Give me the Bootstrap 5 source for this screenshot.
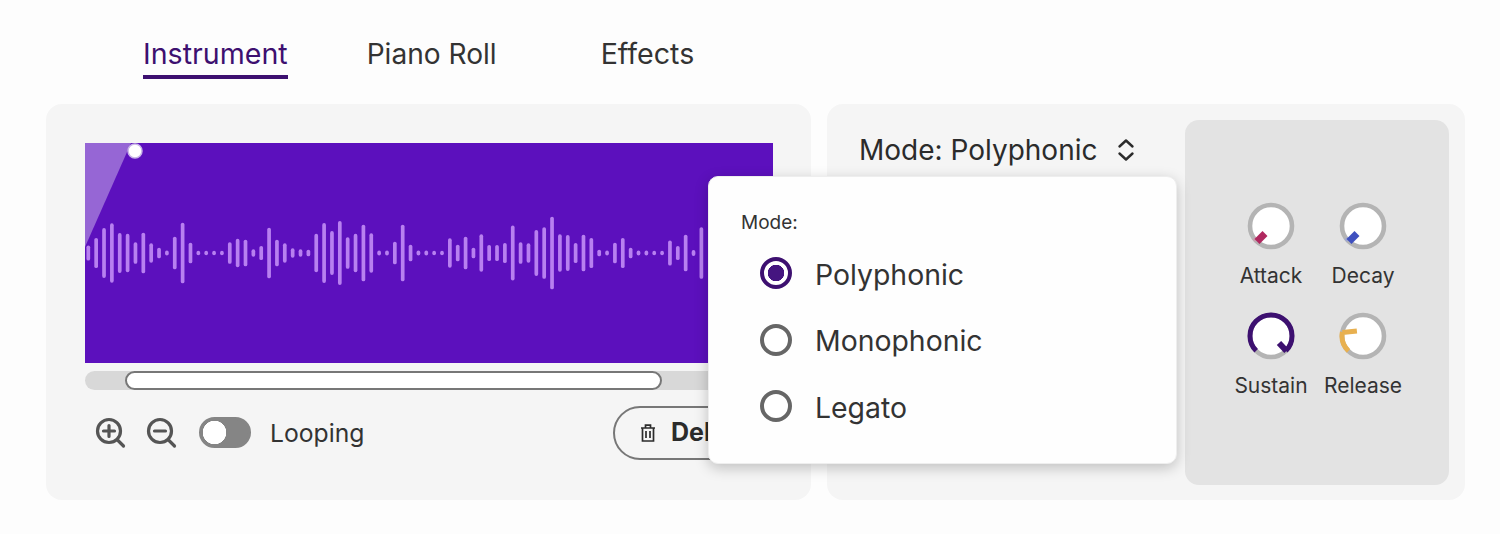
<!DOCTYPE html>
<html lang="en"><head><meta charset="utf-8"><title>Instrument</title>
<link href="https://cdn.jsdelivr.net/npm/bootstrap@5.3.0/dist/css/bootstrap.min.css" rel="stylesheet">
<style>
html,body{height:534px;overflow:hidden}
body{background:#fdfdfd;color:#2b2b2b;font-family:"Inter","Noto Sans",sans-serif}
.tabbar{padding:32px 0 0 143px;gap:79px;height:104px}
.tabbar .nav-link{padding:0;font-size:28.6px;line-height:44px;height:47px;color:#333;border-bottom:4px solid transparent;border-radius:0}
.tabbar .nav-link.active{color:#3d1070;border-bottom-color:#3d1070}
.tabbar .nav-item:nth-child(2){margin-right:25px}
.tabbar .nav-item:nth-child(2) .nav-link{font-size:28.1px}
.stage{gap:16px;padding:0 35px 0 46px;height:396px}
.pane{background:#f5f5f5;border-radius:16px}
.pane-l{width:765px;padding:39px 38px 0 39px}
.pane-r{width:638px;padding:16px}
.wave{display:block;width:688px;height:220px;background:#5c10bd}
.track{height:19px;margin-top:8px;background:#d8d8d8;border-radius:10px}
.thumb{width:537px;height:19px;margin-left:40px;background:#fff;border:2px solid #777;border-radius:10px}
.tools{margin-top:16px;height:54px}
.tool-ic{display:block;width:34px;height:34px}
.tool-gap{margin-left:17px}
.sw.form-switch{padding:0;margin:0 0 0 21px;min-height:0;display:flex;align-items:center}
.sw .form-check-input{width:52px;height:31px;margin:0;border:3px solid #858585;background:#858585 radial-gradient(circle at 12.5px 50%,#fff 0 11.5px,transparent 12px);box-shadow:none}
.sw label{font-size:24.7px;margin:2px 0 0 19px;color:#333}
.del{margin-left:auto;width:160px;height:54px;border:2px solid #777;border-radius:27px;font-size:25px;font-weight:700;color:#2b2b2b;padding:0 0 0 26px;gap:16px}
.mode-col{flex:1 1 auto;min-width:0;padding:15px 0 0 16px;position:relative}
.mode-btn{padding:0;border:0;font-size:28px;line-height:30px;color:#2b2b2b;gap:20px;background:none}
.mode-menu.dropdown-menu{left:-135px;top:56px;width:469px;height:288px;padding:34px 32px;border:1px solid #eee;border-radius:10px;background:#fefefe;box-shadow:0 4px 14px rgba(0,0,0,.22);z-index:5}
.menu-cap{font-size:19px;line-height:24px;margin-bottom:5px;color:#333}
.opt.form-check{display:flex;align-items:center;padding:0 0 0 19px;margin:0;height:66.5px;min-height:0}
.opt .form-check-input{width:32px;height:32px;margin:0;float:none;border:4px solid #666;background:#fff;box-shadow:none}
.opt .form-check-input:checked{border-color:#3d1070;background:radial-gradient(circle,#451580 0 8px,#fff 8.5px)}
.opt label{font-size:28.4px;margin:4px 0 0 23px;color:#333}
.knobs{flex:0 0 264px;width:264px;height:365px;padding-bottom:4px;background:#e3e3e3;border-radius:14px;grid-template-columns:92px 92px;justify-content:center;align-content:center;row-gap:23px}
.knob{font-size:21px;line-height:26px;text-align:center;color:#333;white-space:nowrap}
.knob svg{display:block;margin:0 auto 13px}
</style></head>
<body>
<ul class="nav tabbar">
<li class="nav-item"><a class="nav-link active" href="#">Instrument</a></li>
<li class="nav-item"><a class="nav-link" href="#">Piano Roll</a></li>
<li class="nav-item"><a class="nav-link" href="#">Effects</a></li>
</ul>
<div class="d-flex stage">
<section class="pane pane-l">
<svg class="wave" id="wave" viewBox="0 0 688 220" role="img" aria-label="Waveform">
<polygon points="0,0 46,0 0,104" fill="#fff" fill-opacity=".36"/>
<g id="bars" stroke="#b880f0" stroke-width="3.7" stroke-linecap="round"></g>
<circle cx="50" cy="8" r="7" fill="#fff" stroke="#c9b5e8" stroke-width="1.5"/>
</svg>
<div class="track"><div class="thumb"></div></div>
<div class="d-flex align-items-center tools">
<svg class="tool-ic ms-2" viewBox="0 0 34 34" fill="none" stroke="#555" stroke-width="3.2" stroke-linecap="round"><circle cx="16" cy="15" r="11.5"/><path d="M24.5 24l6 6M16 9.5v11M10.5 15h11"/></svg>
<svg class="tool-ic tool-gap" viewBox="0 0 34 34" fill="none" stroke="#555" stroke-width="3.2" stroke-linecap="round"><circle cx="16" cy="15" r="11.5"/><path d="M24.5 24l6 6M10.5 15h11"/></svg>
<div class="form-check form-switch sw"><input class="form-check-input" type="checkbox" role="switch" id="loop"><label for="loop">Looping</label></div>
<button type="button" class="btn del d-flex align-items-center">
<svg width="14" height="18" viewBox="0 0 14 18" fill="none" stroke="#2b2b2b" stroke-width="1.7"><path d="M0 4h14M4.5 4V1.2h5V4M1.5 4v13h11V4M5 7v7M9 7v7"/></svg>Delete</button>
</div>
</section>
<section class="pane pane-r d-flex">
<div class="dropdown mode-col">
<button type="button" class="btn mode-btn d-flex align-items-center">Mode: Polyphonic
<svg width="18" height="24" viewBox="0 0 18 24" fill="none" stroke="#2b2b2b" stroke-width="2.4" stroke-linecap="round" stroke-linejoin="round"><path d="M2.5 8.5l6.5-6 6.5 6M2.5 15.5l6.5 6 6.5-6"/></svg></button>
<div class="dropdown-menu show mode-menu">
<div class="menu-cap">Mode:</div>
<div class="form-check opt"><input class="form-check-input" type="radio" name="m" id="m1" checked><label for="m1">Polyphonic</label></div>
<div class="form-check opt"><input class="form-check-input" type="radio" name="m" id="m2"><label for="m2">Monophonic</label></div>
<div class="form-check opt"><input class="form-check-input" type="radio" name="m" id="m3"><label for="m3">Legato</label></div>
</div>
</div>
<div class="knobs d-grid">
<div class="knob"><svg width="48" height="48" viewBox="-24 -24 48 48" fill="none"><circle r="21" fill="#fff" stroke="#b4b4b4" stroke-width="4.6"/><path d="M-14.8 14.8L-17 12" stroke="#c9a0b0" stroke-width="4"/><path d="M-6 7.5l-8 8" stroke="#b0285f" stroke-width="7"/></svg>Attack</div>
<div class="knob"><svg width="48" height="48" viewBox="-24 -24 48 48" fill="none"><circle r="21" fill="#fff" stroke="#b4b4b4" stroke-width="4.6"/><path d="M-14.8 14.8L-17 12" stroke="#a0a8d0" stroke-width="4"/><path d="M-6 7.5l-8 8" stroke="#3f50bf" stroke-width="7"/></svg>Decay</div>
<div class="knob"><svg width="48" height="48" viewBox="-24 -24 48 48" fill="none"><circle r="21" fill="#fff" stroke="#b4b4b4" stroke-width="4.6"/><path d="M-14.8 14.8A21 21 0 1 1 14.8 14.8" stroke="#3d1070" stroke-width="5"/><path d="M8 7l7.5 8" stroke="#3d1070" stroke-width="6"/></svg>Sustain</div>
<div class="knob"><svg width="48" height="48" viewBox="-24 -24 48 48" fill="none"><circle r="21" fill="#fff" stroke="#b4b4b4" stroke-width="4.6"/><path d="M-14.5 15A21 21 0 0 1 -20.6 -4M-20.6 -3.5l14.5 -1.5" stroke="#e8b04f" stroke-width="5"/></svg>Release</div>
</div>
</section>
</div>
<script>
var h=[45,90,150,178,120,115,65,122,58,32,15,98,182,62,12,12,12,12,65,85,80,22,42,152,80,58,28,22,20,115,180,132,192,95,115,170,118,15,15,68,170,50,15,15,12,12,88,50,98,32,112,48,48,60,165,65,58,138,155,218,112,108,60,110,90,20,15,62,90,32,15,15,12,12,75,42,110,18,155];
var s='';h.forEach(function(v,i){var x=(3.3+i*7.86).toFixed(2),d=Math.max(v/6-1.85,.3).toFixed(1);s+='<line x1="'+x+'" x2="'+x+'" y1="'+(110-d)+'" y2="'+(110+ +d)+'"/>';});
document.getElementById('bars').innerHTML=s;
</script>
<script src="https://cdn.jsdelivr.net/npm/bootstrap@5.3.0/dist/js/bootstrap.bundle.min.js"></script>
</body></html>
